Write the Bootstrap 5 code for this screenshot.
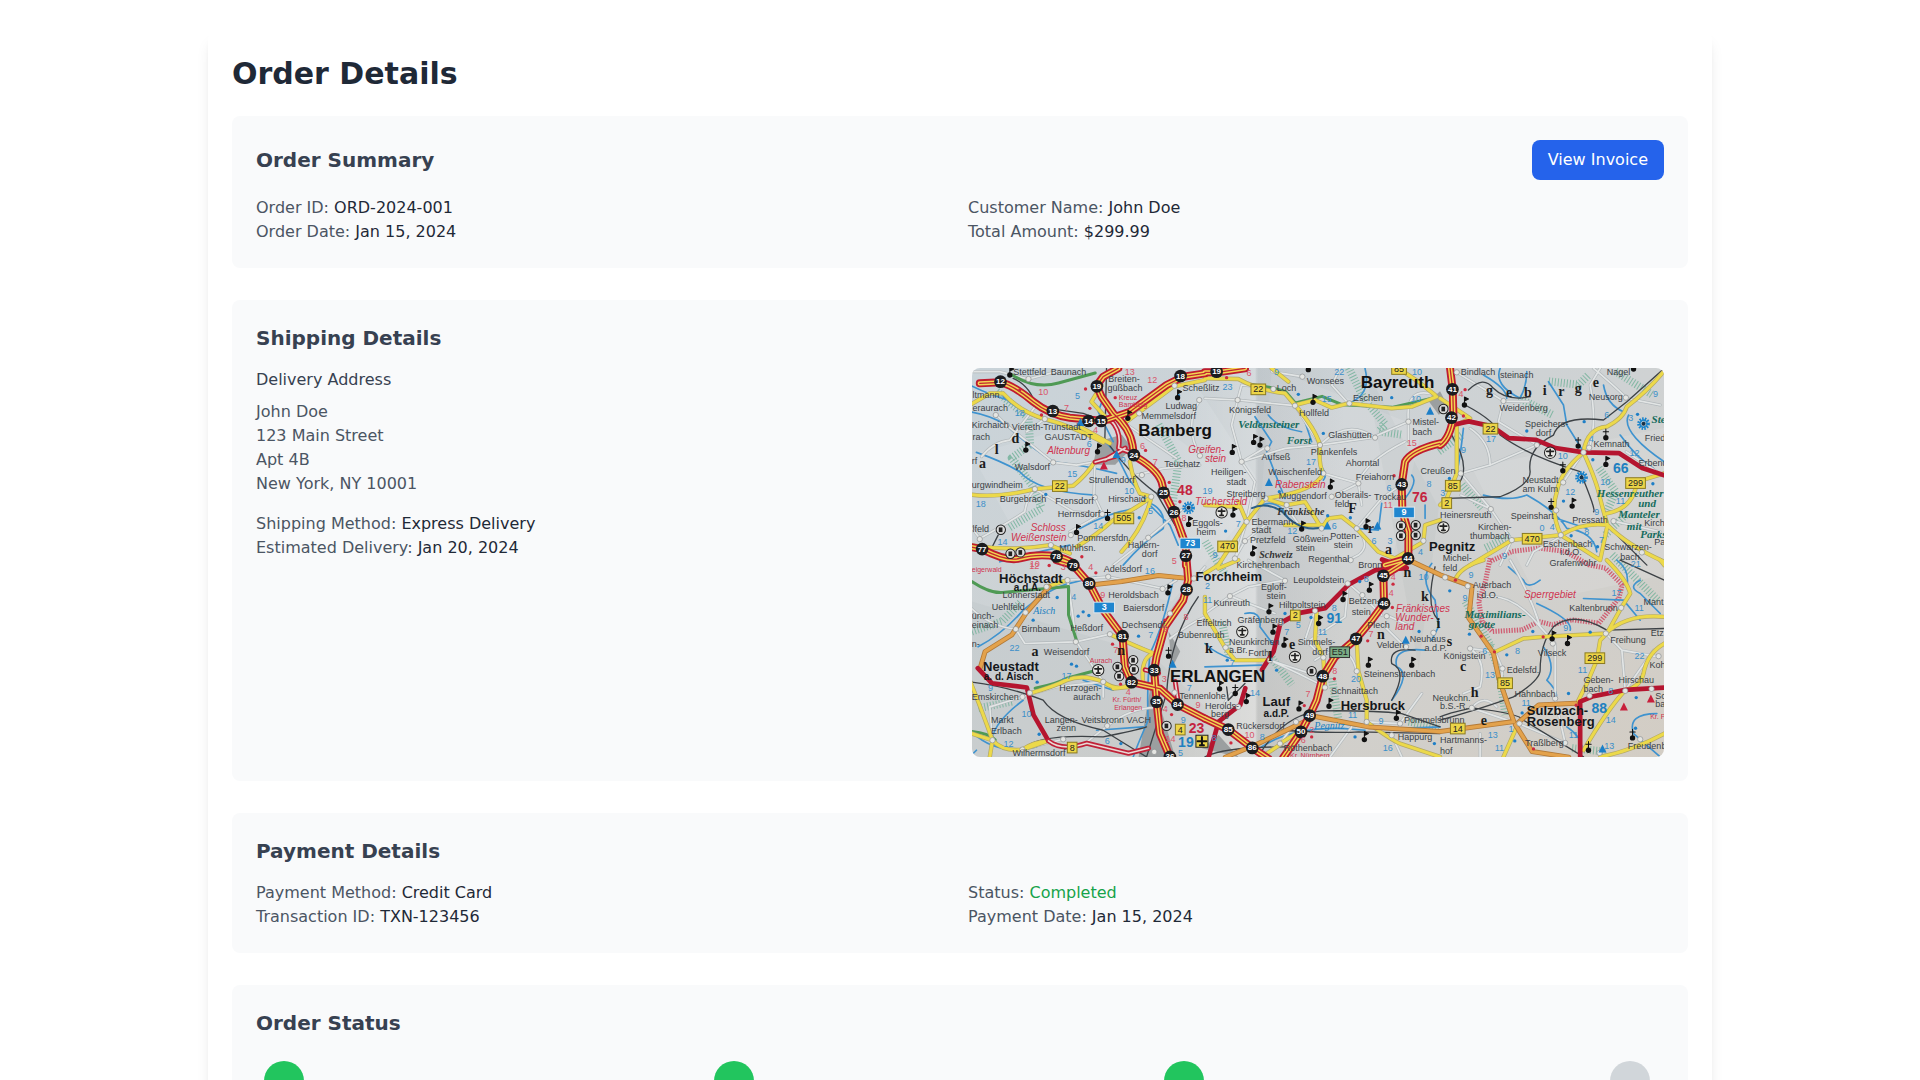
<!DOCTYPE html>
<html lang="en">
<head>
<meta charset="utf-8">
<meta name="viewport" content="width=device-width, initial-scale=1">
<title>Order Details</title>
<link href="https://cdn.jsdelivr.net/npm/bootstrap@5.3.0/dist/css/bootstrap.min.css" rel="stylesheet">
<style>
  body { font-family: "DejaVu Sans", sans-serif; font-size: 16px; line-height: 24px; color: #1f2937; background: #fff; }
  .page-wrap { max-width: 1536px; padding: 32px 16px; }
  .order-sheet { background: #fff; border-radius: 8px; padding: 24px; box-shadow: 0 10px 15px -3px rgba(0,0,0,.1), 0 4px 6px -4px rgba(0,0,0,.1); }
  h1 { font-size: 30px; line-height: 36px; font-weight: 700; margin: 0 0 24px; color: #1f2937; }
  h2 { font-size: 20px; line-height: 28px; font-weight: 600; margin: 0; color: #374151; }
  h3 { font-size: 16px; line-height: 24px; font-weight: 500; color: #374151; margin: 0 0 8px; }
  .panel { background: #f9fafb; border-radius: 8px; padding: 24px; }
  .panel + .panel { margin-top: 32px; }
  p, address { margin: 0; color: #4b5563; line-height: 24px; }
  p span { color: #1f2937; font-weight: 500; }
  p .is-done { color: #16a34a; }
  .btn-invoice { --bs-btn-bg: #2563eb; --bs-btn-color: #fff; --bs-btn-hover-bg: #1d4ed8; --bs-btn-hover-color: #fff; border: 0; border-radius: 8px; padding: 8px 16px; line-height: 24px; }
  .g-wide { --bs-gutter-x: 24px; }
  .g-base { --bs-gutter-x: 16px; }
  .route-map { display: block; width: 100%; aspect-ratio: 16 / 9; border-radius: 8px; }
  .step { display: flex; justify-content: center; }
  .step-s { width: 56px; } .step-m { width: 68px; } .step-l { width: 76px; }
  .step i { width: 40px; height: 40px; border-radius: 50%; background: #22c55e; }
  .step .todo { background: #d1d6da; }

  .route-map path { fill: none; stroke-linecap: round; stroke-linejoin: round; }
  .route-map text { font-family: "Liberation Sans", Arial, sans-serif; dominant-baseline: central; }
  .route-map .town { font-size: 27px; fill: #3b3f45; }
  .route-map .city { font-size: 51px; font-weight: 700; fill: #111; }
  .route-map .mid { font-size: 39px; font-weight: 700; fill: #15171a; }
  .route-map .sub { font-size: 30px; font-weight: 700; fill: #15171a; }
  .route-map .sight { font-size: 30px; font-style: italic; fill: #cf3450; }
  .route-map .exit { font-size: 21px; fill: #cf3450; }
  .route-map .wood { font-family: "Liberation Serif", serif; font-size: 33px; font-weight: 700; font-style: italic; fill: #146b5c; }
  .route-map .area { font-family: "Liberation Serif", serif; font-size: 30px; font-weight: 700; font-style: italic; fill: #333; }
  .route-map .spread { font-family: "Liberation Serif", serif; font-size: 42px; font-weight: 700; fill: #1c1c1c; }
  .route-map .water { font-family: "Liberation Serif", serif; font-size: 30px; font-style: italic; fill: #1c7fc0; }
  .route-map .km { font-size: 27px; fill: #3b8fc9; text-anchor: middle; }
  .route-map .kmr { font-size: 27px; fill: #d9546a; text-anchor: middle; }
  .route-map .page { font-size: 42px; font-weight: 700; fill: #2080c0; text-anchor: middle; }
  .route-map .pager { font-size: 42px; font-weight: 700; fill: #c42440; text-anchor: middle; }
  .route-map .jn { font-size: 24px; font-weight: 700; fill: #fff; text-anchor: middle; }
  .route-map .no { font-size: 27px; fill: #222; text-anchor: middle; }
  .route-map .now { font-size: 27px; font-weight: 700; fill: #fff; text-anchor: middle; }
</style>
<script src="https://cdn.jsdelivr.net/npm/bootstrap@5.3.0/dist/js/bootstrap.bundle.min.js"></script>
</head>
<body>
<main class="container-fluid page-wrap">
  <div class="order-sheet">
    <h1>Order Details</h1>

    <section class="panel">
      <div class="d-flex justify-content-between align-items-center mb-3">
        <h2>Order Summary</h2>
        <button type="button" class="btn btn-invoice">View Invoice</button>
      </div>
      <div class="row g-base">
        <div class="col-md-6">
          <p>Order ID: <span>ORD-2024-001</span></p>
          <p>Order Date: <span>Jan 15, 2024</span></p>
        </div>
        <div class="col-md-6">
          <p>Customer Name: <span>John Doe</span></p>
          <p>Total Amount: <span>$299.99</span></p>
        </div>
      </div>
    </section>

    <section class="panel">
      <h2 class="mb-3">Shipping Details</h2>
      <div class="row g-wide">
        <div class="col-md-6">
          <h3>Delivery Address</h3>
          <address>John Doe<br>123 Main Street<br>Apt 4B<br>New York, NY 10001</address>
          <div class="mt-3">
            <p>Shipping Method: <span>Express Delivery</span></p>
            <p>Estimated Delivery: <span>Jan 20, 2024</span></p>
          </div>
        </div>
        <div class="col-md-6">
<svg class="route-map" id="routeMap" viewBox="0 0 2076 1167" preserveAspectRatio="xMidYMid slice" role="img" aria-label="Delivery map">
  <defs>
    <linearGradient id="paper" x1="0" y1="0" x2="1" y2="1">
      <stop offset="0" stop-color="#c9d3d9"/><stop offset=".5" stop-color="#cfd2d3"/><stop offset="1" stop-color="#d3cdc4"/>
    </linearGradient>
    <linearGradient id="fold" x1="0" x2="1" y1="0" y2="0">
      <stop offset="0" stop-color="#fff" stop-opacity="0"/><stop offset=".48" stop-color="#fff" stop-opacity=".25"/>
      <stop offset=".5" stop-color="#70757a" stop-opacity=".12"/><stop offset="1" stop-color="#70757a" stop-opacity="0"/>
    </linearGradient>
    <g id="minor">
      <g transform="translate(-6 -9)"><path d="M35 275Q70 230 120 225L200 120M80 150L110 180 250 292M195 372Q170 400 165 440 120 470 30 520M250 292L320 300 375 290M375 397L400 450M300 500L395 447M500 330L580 310 690 300M690 105Q640 180 690 272M430 600L535 518 640 430M0 20L90 20 176 42 260 20M375 290L372 397M225 162L170 200M470 178L620 280M195 372L310 440 395 447M30 520L0 480"/></g>
      <g transform="translate(699 -9)"><path d="M98 105L110 60 200 70M98 105L270 122M430 115L380 60 405 10M270 122L345 240 500 218 610 170M110 290L80 180 98 105M110 290L240 250 345 240M185 245L110 290 150 350 125 470M510 218Q430 160 350 235M610 170Q600 60 690 90M460 355Q480 290 600 230M355 325L460 355 470 420M90 580L120 528 180 480M240 420L290 490 350 490M455 490L530 400 590 358M292 35L200 20M125 470L90 580M380 395L460 355M0 100L98 105M455 490Q500 540 460 570L430 585M610 170L610 230"/></g>
      <g transform="translate(1404 -9)"><path d="M50 22L190 108 175 170 290 240M190 108L265 110M290 240Q220 270 150 300L62 325M90 190Q150 230 150 300M62 325L152 432 215 525 370 510M152 432L62 390M370 350L430 262M560 100Q520 60 460 10M450 240Q470 170 450 60L480 10M215 525L180 600M560 100L660 120M520 468L660 500M370 510L280 560 260 600M558 260L650 320"/></g>
      <g transform="translate(-6 576)"><path d="M293 60L320 245 400 365M420 222L318 245M138 207L165 250 318 245M167 157L138 207M138 207Q60 200 0 140M400 365L400 410M158 410L60 440 68 540M158 410L260 380 400 365M412 497L345 550M280 537L158 568M412 497Q500 430 590 445M318 245Q310 160 293 60M578 85L415 50 293 60M578 85L620 60M420 222L530 270M600 235Q660 190 705 170M230 80L167 157M705 20L670 60M600 160L650 90"/></g>
      <g transform="translate(699 576)"><path d="M75 108L130 80 240 60M75 108L0 160M75 108L210 160M430 70L470 105 530 165M355 290L300 240 330 150M195 300L345 350M360 380L280 340 195 300M240 60L130 0M545 165L620 200M430 70L420 170 300 250M360 380Q320 420 320 450M600 260L540 200M80 400Q20 470 100 440M455 333Q430 230 330 300M273 485L225 550M485 485L585 490 650 400M560 525L590 590M375 590L440 500"/></g>
      <g transform="translate(1404 576)"><path d="M210 0Q270 100 300 200L345 250 345 415M83 78L15 52M497 220L545 270 555 390M90 265L165 275M187 325L165 275M95 443Q170 470 235 490M95 443Q130 400 170 440M300 200Q220 100 140 110M375 548L235 490M555 390L640 270M375 548L345 415M187 325Q180 380 200 440M90 265Q140 300 120 380L70 400M545 270L655 290M120 520L120 590"/></g>
    </g>
    <g id="yellow">
      <g transform="translate(-6 -9)"><path d="M100 85Q150 140 225 162 300 180 400 232M0 388Q80 400 195 372L310 362Q350 330 375 290M545 395Q500 430 430 465 380 510 320 545M0 540Q120 560 240 540L300 565M480 290Q490 350 510 385L545 395M470 170L610 65 705 45M330 185L420 235M0 120L60 85 100 85M395 60L365 110 420 170M455 560Q520 490 545 395"/></g>
      <g transform="translate(699 -9)"><path d="M0 40L100 42Q160 75 240 85L270 120 330 105 380 128 430 115 560 130 620 125 695 95M580 10L640 50 690 90M200 10L250 50M270 120Q330 190 345 240 340 300 355 325 330 380 180 400L125 470 40 600M180 400L245 420 300 410 350 490 370 460 410 455 455 490 520 560 570 580 655 530 660 480 705 465M100 410L125 470M0 420L100 425M240 480L350 480"/></g>
      <g transform="translate(1404 -9)"><path d="M0 100L90 160 50 180 50 325 20 400M670 20Q620 80 560 125 550 160 500 185 440 190 430 262 360 320 350 380 330 440 362 510M430 262Q470 350 480 400 490 440 502 480M590 350Q580 430 500 445M672 325L590 350M90 600L215 525 362 510Q430 470 502 480L480 585 362 510M502 480Q560 540 672 590M0 420L20 400"/></g>
      <g transform="translate(-6 576)"><path d="M178 400Q250 380 290 360 340 340 400 365 450 400 485 366M0 360Q40 460 68 540 100 575 158 568L235 542M68 540L60 590M0 518L68 540M158 568Q190 545 235 542M420 222Q500 260 553 280 510 290 520 370M293 60L230 80M480 380L430 385"/></g>
      <g transform="translate(699 576)"><path d="M0 160L60 262 90 300 195 300M335 155L330 240 355 290 360 380M455 240L460 333 485 420 485 485M225 550L290 510M485 485Q560 540 585 550L705 590M0 40L40 15M170 590L230 550M100 0L40 25M0 110L0 160"/></g>
      <g transform="translate(1404 576)"><path d="M45 60Q60 20 130 0M500 0Q560 60 570 100L543 143 500 220 480 240 470 300 440 370 410 430M165 275L250 235 310 230 400 225 500 220M672 170Q560 160 497 220M672 250Q620 280 610 340 600 380 555 390M555 390Q500 450 430 570M190 590L230 500M480 590Q580 570 672 520M660 0L672 15"/></g>
    </g>
    <g id="mway">
      <g transform="translate(-6 -9)"><path d="M30 55L92 52Q130 60 190 110 240 150 300 158L400 168 480 140 590 60 640 35 705 25"/><path d="M445 10L400 35 380 62 395 95 430 145Q480 190 488 240L492 272Q560 310 575 350L583 383 612 441 648 540 648 600"/><path d="M0 545L37 552Q110 590 150 580 200 565 260 574 300 585 316 600"/></g>
      <g transform="translate(699 -9)"><path d="M0 22L38 22 120 10M705 235Q620 255 600 290L590 358 592 440 610 500 610 580 540 600"/></g>
      <g transform="translate(1404 -9)"><path d="M30 10L38 75 40 155Q30 220 0 240"/></g>
      <g transform="translate(-6 576)"><path d="M260 0L310 15 358 70 400 150 458 228 465 320 485 366 570 385 623 433 705 475M650 0L655 60 640 120 585 200 560 290 553 330 560 425 570 520 600 590"/></g>
      <g transform="translate(699 576)"><path d="M610 0L535 47 537 130 500 180 453 236 390 290 353 350 335 420 314 466 288 515 235 592M0 475L70 508 142 563 190 595"/></g>
    </g>
    <circle id="jn" r="19" fill="#1b1c1f"/>
    <g id="church"><path d="M0 0V-24L12 -18 0 -12" style="stroke:#111;stroke-width:3;fill:#111"/><circle r="8" fill="#111"/></g>
    <g id="chapel"><path d="M0 0V-26M-8 -18H8" style="stroke:#111;stroke-width:3"/><circle r="8" fill="#111"/></g>
    <g id="fly"><circle r="17" fill="#e8e8e4" stroke="#222" stroke-width="3"/><path d="M-10 -4H10M0 -10V9M-5 9H5" style="stroke:#222;stroke-width:5"/></g>
    <g id="stop"><circle r="14" fill="#ddd" stroke="#222" stroke-width="3"/><rect x="-6" y="-7" width="11" height="14" fill="#222"/></g>
    <path id="tri" d="M0 -13L12 11H-12Z" style="fill:#1c7fc8"/>
    <path id="trir" d="M0 -13L12 11H-12Z" style="fill:#c8203c"/>
    <g id="star"><circle r="13" fill="none" stroke="#1b84cc" stroke-width="12" stroke-dasharray="4 3"/><circle r="11" fill="none" stroke="#1b84cc" stroke-width="4"/><circle r="6" fill="#16324a"/></g>
    <circle id="town" r="8" fill="#e4e5e2" stroke="#898d90" stroke-width="2"/>
    <circle id="pin" r="5" fill="#1f7fc6"/>
    <circle id="pinr" r="5" fill="#cc2b3f"/>
  </defs>

  <rect width="2076" height="1167" fill="url(#paper)"/>
  <g opacity=".1"><path style="fill:#fff" d="M0 260L500 120 860 400 600 700 200 620ZM900 0L1350 180 1250 620 860 480ZM1500 300L2076 180V620L1700 700Z"/></g>
  <g opacity=".06"><path style="fill:#7c8284" d="M0 700L540 860 854 1167H0ZM640 0L854 330V0ZM1180 0L1400 420 1340 900 1250 400Z"/></g>
  <rect x="600" width="520" height="1167" fill="url(#fold)"/>
  <path style="fill:#9b9fa0" d="M364 290L378 220 450 200 480 240 430 290ZM500 1167L540 930 610 1167ZM1370 100L1404 70 1430 120 1400 140ZM690 1140L740 1100 800 1167ZM590 790L625 850 600 900Z"/>

  <g stroke="#6fb097" stroke-width="24" stroke-dasharray="3 6" opacity=".8"><path style="stroke-linecap:butt" d="M75 70L170 150 175 230 120 270 180 350 210 420 110 480M560 170L620 280 600 420M0 790L90 760 150 700M1190 110L1240 170 1220 190 1290 200M1130 0L1180 100M1730 40L1820 50 1850 20M1640 90L1740 140M1880 300L1930 370 1900 440M1470 350L1530 420M1540 540L1620 500M700 520L760 620M900 870L960 950M1550 830L1580 900 1600 1040M1920 560L2060 700M1080 930L1100 1060M1930 10L2040 80M20 1020L120 1000M1400 250L1470 200M1800 1140L1900 1150M1480 700L1560 840M750 760L770 860M1310 1060L1400 1080M1900 500L1960 440"/></g>
  <g stroke="#cf4a63" stroke-width="15" stroke-dasharray="4 4" opacity=".85"><path style="stroke-linecap:butt" d="M1554 570L1540 640 1520 700 1530 760 1560 790 1650 785 1700 760 1740 770 1800 755 1880 765 1940 690 1950 650 1900 600 1850 590 1780 550 1700 540 1620 550 1554 580"/></g>

  <g stroke="#3f93cf" stroke-width="5">
    <g transform="translate(-6 -9)"><path d="M0 140Q60 150 110 180 160 230 250 290 340 300 440 325M20 262Q100 290 150 320 200 380 375 390M100 95Q180 170 330 190 400 210 440 270L475 340 540 420 560 440 600 480 625 540M330 490Q420 440 500 430M530 410Q590 430 580 490 520 530 460 600M400 100L385 140 430 230M90 590Q200 560 300 540M0 60Q60 90 130 110"/></g>
    <g transform="translate(699 -9)"><path d="M150 155L200 230 185 260 220 350 240 400M170 420Q220 400 250 460 300 500 350 490M345 300Q370 330 355 345M190 150Q220 190 290 200M480 10Q500 90 430 115M530 415L520 495 455 490M620 330Q640 350 600 400M300 170L320 230M660 420V460"/></g>
    <g transform="translate(1404 -9)"><path d="M130 30Q200 70 200 100M325 50L370 120 380 180 430 260M180 10Q160 60 240 100 260 60 260 20M565 150Q540 200 672 290M540 210Q590 280 640 310M130 390Q210 410 260 390 350 440 380 490 460 500 470 560M70 190Q60 280 50 325M350 460L440 490M490 60Q500 120 550 140"/></g>
    <g transform="translate(-6 576)"><path d="M25 260Q100 220 160 150 230 90 290 72L380 50M610 60Q580 200 540 280 530 400 535 480 500 560 490 590M340 360L430 390M0 510Q80 590 200 560M380 510L520 500M0 590L20 570M160 420Q80 480 68 530"/></g>
    <g transform="translate(699 576)"><path d="M0 320L170 315M120 160Q170 150 165 200L210 260M680 10Q640 60 690 120L700 200 680 240M660 270Q560 260 575 320 620 340 560 420M170 560Q260 500 420 505L480 510M0 250Q30 280 90 300M410 490Q520 510 705 500"/></g>
    <g transform="translate(1404 576)"><path d="M205 20L250 60Q260 90 300 60M290 130Q400 180 390 210M430 115L550 120 600 180M310 260Q350 320 320 360 360 400 345 415M600 60Q560 80 600 100L660 160M650 460Q560 460 580 520L660 590M380 500Q440 540 420 590M530 0Q570 30 560 80"/></g>
  </g>
  <use href="#minor" stroke="#b2b8bb" stroke-width="9"/>
  <use href="#minor" stroke="#e2e5e5" stroke-width="5"/>
  <g stroke="#3d4246" stroke-width="4">
    <g transform="translate(-6 -9)"><path d="M130 40Q180 60 200 125L340 145 405 168M410 10L405 220Q470 320 560 385L650 540M85 510L60 560"/></g>
    <g transform="translate(1404 -9)"><path d="M85 75Q130 30 160 70 200 110 270 95M75 120Q170 170 180 210 260 270 420 320 470 440 460 440M20 400L180 395Q270 360 270 320 260 250 340 210 360 150 490 165L560 110 672 10M35 210Q90 300 60 350M500 480L620 600"/></g>
    <g transform="translate(-6 576)"><path d="M0 365Q120 380 220 420 260 480 400 510 480 560 530 590M158 568Q200 520 400 530 500 510 530 500M685 110Q600 230 590 400L530 590"/></g>
    <g transform="translate(699 576)"><path d="M630 270Q550 260 560 310 610 330 560 420M165 580Q240 460 350 452 500 450 590 460L705 500M690 20Q660 140 700 180M0 590Q60 560 240 560M65 380L70 420 120 370M230 510Q400 520 460 515L705 520"/></g>
    <g transform="translate(1404 576)"><path d="M0 480Q140 440 220 410 300 360 300 330 300 250 340 200 400 150 500 210L672 205M95 443Q240 460 250 480L430 590M95 443Q20 460 0 470M540 0L672 60"/></g>
  </g>
  <g stroke="#4f9a55" stroke-width="9">
    <path d="M120 20Q190 65 260 45L370 15M838 50Q890 55 940 70L970 105 1050 85 1110 110 1260 118 1390 88M0 640Q60 680 100 672L290 655 290 740 315 820M190 960Q260 945 285 930L360 910M0 1090Q50 1095 70 1115"/>
  </g>
  <use href="#yellow" stroke="#b3a866" stroke-width="13"/>
  <use href="#yellow" stroke="#ecd94a" stroke-width="9"/>
  <g stroke="#2d5f86" stroke-width="6"><path d="M840 420Q880 400 930 430 980 490 1040 480"/></g>
  <path stroke="#b37a38" stroke-width="15" d="M362 650L450 640 560 622 640 630M232 656L164 733 120 800 40 850 25 900M1310 576L1404 620 1500 655 1490 750 1564 855 1580 930 1625 1060 1404 1090 1190 1076 1030 1045 850 1130 760 1167M1630 1070L1700 1010 1810 1005M1630 1070L1680 1150 1790 1167"/>
  <path stroke="#e3a24c" stroke-width="10" d="M362 650L450 640 560 622 640 630M232 656L164 733 120 800 40 850 25 900M1310 576L1404 620 1500 655 1490 750 1564 855 1580 930 1625 1060 1404 1090 1190 1076 1030 1045 850 1130 760 1167M1630 1070L1700 1010 1810 1005M1630 1070L1680 1150 1790 1167"/>
  <path stroke="#b5152f" stroke-width="14" d="M1444 170L1490 160 1560 175 1610 210 1690 215 1750 240 1835 253 1940 255 2010 300 2076 322M1824 1167V1000L1860 985 1960 965 2010 962 2076 958M1304 600L1210 606 1129 650 1060 720 980 735 925 765 905 850 870 905M1230 574L1304 600M820 960L805 1010 740 1060 710 1167M18 900L60 945 165 958 185 1040 230 1118"/>
  <path stroke="#c02238" stroke-width="15" d="M230 1118Q270 1150 345 1125L470 1155 530 1140M415 155Q450 190 440 240L480 255M370 282L430 265M400 275L460 240M520 905L560 915M610 940L620 1010"/>
  <path stroke="#e9d8d4" stroke-width="5" d="M230 1118Q270 1150 345 1125L470 1155 530 1140M415 155Q450 190 440 240L480 255M370 282L430 265M400 275L460 240M520 905L560 915M610 940L620 1010"/>
  <use href="#mway" stroke="#bf1c2e" stroke-width="24"/>
  <use href="#mway" stroke="#f1d552" stroke-width="13"/>
  <use href="#mway" stroke="#c4262f" stroke-width="4"/>
</svg>
        </div>
      </div>
    </section>

    <section class="panel">
      <h2 class="mb-3">Payment Details</h2>
      <div class="row g-base">
        <div class="col-md-6">
          <p>Payment Method: <span>Credit Card</span></p>
          <p>Transaction ID: <span>TXN-123456</span></p>
        </div>
        <div class="col-md-6">
          <p>Status: <span class="is-done">Completed</span></p>
          <p>Payment Date: <span>Jan 15, 2024</span></p>
        </div>
      </div>
    </section>

    <section class="panel">
      <h2 class="mb-4">Order Status</h2>
      <div class="d-flex justify-content-between">
        <div class="step step-s"><i></i></div>
        <div class="step step-l"><i></i></div>
        <div class="step step-s"><i></i></div>
        <div class="step step-m"><i class="todo"></i></div>
      </div>
    </section>
  </div>
</main>
<script>
// Map places, one sheet per block: origin, then "kind x y text" entries.
const sheets = [
[-6, -9, `pinr 150 75;pinr 347 72;town 176 42;town 78 150;town 110 180;town 225 162;town 250 292;town 195 372;town 375 397;town 397 447;town 688 105;town 690 272;town 516 330;town 544 395;town 535 518;town 30 522;town 243 540;town 303 510;town 614 62;town 508 145;pinr 436 98;pinr 215 150;pinr 360 130;pinr 598 352;pinr 630 410;pinr 527 256;pin 228 388;pin 508 458;pin 626 92;pinr 336 575
church 120 30;church 168 255;church 383 260;church 623 98;church 474 160;chapel 413 460;church 320 502;church 656 478;tri 440 268;tri 332 172;trir 402 302;star 656 428;stop 122 566;stop 152 562;stop 93 494
jn 92 50 12;jn 249 138 13;jn 356 168 14;jn 394 168 15;jn 381 64 19;jn 632 33 18;jn 492 270 24;jn 581 383 25;jn 612 441 26;jn 37 552 77;jn 260 574 78;jn 648 572 27
town 130 22 Stettfeld;town 243 22 Baunach;town 8 90 ltmann;town 8 130 eraurach;town 6 180 Kirchaich;town 8 217 rach;town 126 187 Viereth-Trunstadt;town 224 217 GAUSTADT;town 135 306 Walsdorf;town 6 360 urgwindheim;town 90 402 Burgebrach;town 256 408 Frensdorf;town 264 448 Herrnsdorf;town 8 492 lfeld;town 322 520 Pommersfdn.;town 268 550 Mühlhsn.;town 474 540 Hallern-;town 516 567 dorf;town 415 402 Hirschaid;town 357 345 Strullendorf;town 415 43 Breiten-;town 413 70 güßbach;town 638 68 Scheßlitz;town 587 122 Ludwag;town 515 154 Memmelsdorf;town 583 296 Teuchatz;town 6 288 rf;town 667 475 Eggols-;town 680 502 heim
sight 232 257 Altenburg;sight 183 486 Schloss;sight 124 518 Weißenstein;exit 447 96 Kreuz;exit 447 117 Bamberg;sight 655 252 Greifen-;city 505 195 Bamberg
kmr 220 80 10;kmr 290 128 7;km 323 94 5;km 150 143 18;km 358 237 6;km 307 328 15;km 33 418 18;km 478 378 10;km 542 438 5;km 385 484 14;km 98 530 14;kmr 547 44 12;kmr 480 22 13;kmr 377 195 4;km 460 285 9;kmr 518 242 6;kmr 556 290 7;kmr 642 460 8;kmr 195 596 10;kmr 613 588 5;pager 645 376 48
sign 270 363 22;sign 462 460 505;blue 661 535 73;spread 125 220 d;spread 75 252 l;spread 28 294 a`],
[699, -9, `town 98 105;town 292 35;town 270 122;town 433 115;town 510 218;town 610 170;town 110 290;town 345 240;town 460 355;town 355 325;town 182 400;town 125 470;town 380 395;town 245 420;town 455 490;town 120 528;town 90 580;town 350 490;town 187 250;town 205 72;town 437 585;town 655 527;pin 560 98;pin 280 88;pin 355 205;pin 223 380;pin 436 458;pin 62 498;pin 368 452;pinr 65 38;pinr 567 332
church 310 14;church 324 112;church 146 232;church 165 240;church 82 262;church 376 366;church 84 450;church 290 492;church 143 566;church 483 485;tri 675 138;tri 192 352;tri 367 482;tri 517 482;fly 50 442;stop 588 482;stop 632 480;stop 588 512;stop 632 510
jn 35 20 19;jn 590 358 43;jn 609 580 44
town 215 68 Loch;town 305 48 Wonsees;town 444 100 Eschen;town 72 135 Königsfeld;town 282 145 Hollfeld;town 370 211 Glashütten;town 622 172 Mistel-;town 622 200 bach;town 170 275 Aufseß;town 317 260 Plankenfels;town 18 322 Heiligen-;town 65 352 stadt;town 190 320 Waischenfeld;town 422 294 Ahorntal;town 452 335 Freiahorn;town 646 318 Creußen;town 65 387 Streitberg;town 221 394 Muggendorf;town 389 390 Oberails-;town 389 416 feld;town 507 396 Trockau;town 140 470 Ebermann-;town 140 496 stadt;town 135 526 Pretzfeld;town 263 522 Gößwein-;town 272 550 stein;town 376 514 Potten-;town 386 540 stein;town 310 582 Regenthal
sight 0 280 stein;sight 210 357 Rabenstein;sight -30 410 Tüchersfeld;wood 100 178 Veldensteiner;wood 245 225 Forst;area 217 438 Fränkische;area 163 568 Schweiz;city 467 53 Bayreuth;mid 672 544 Pegnitz
kmr 132 25 6;km 215 22 9;km 68 65 23;km 403 22 22;km 365 102 15;km 633 102 10;km 636 22 10;kmr 620 234 15;km 318 292 17;km 8 378 19;km 100 478 7;km 262 497 12;km 388 483 6;km 507 528 6;km 555 528 3;kmr 549 420 11;km 552 370 6;km 672 358 8;km 646 562 4;km 30 570 9;pager 644 396 76
sign 160 73 22;sign 582 12 85;sign 68 544 470;blue 597 442 9;spread 430 430 F;spread 488 490 r;spread 540 552 a`],
[1404, -9, `town 50 22;town 190 108;town 290 240;town 557 98;town 62 325;town 152 432;town 215 525;town 369 352;town 430 262;town 447 248;town 348 436;town 362 510;town 520 468;town 605 562;pin 432 170;pin 592 148;pin 458 284;pin 370 408;pin 260 198;pin 638 356;pin 393 512;pin 28 340;pin 472 545;pinr 75 74;pinr 70 153
church 73 120;church 497 298;chapel 497 218;chapel 414 243;chapel 368 317;church 396 423;chapel 333 427;church 580 12;star 610 176;star 424 337;fly 330 263;fly 10 487;stop 10 132
jn 37 73 41;jn 34 158 42
town 62 22 Bindlach;town 180 30 steinach;town 500 22 Nagel;town 178 130 Weidenberg;town 446 97 Neusorg;town 255 178 Speichers-;town 287 204 dorf;town 614 220 Fried;town 460 238 Kemnath;town 595 293 Erbend;town 247 345 Neustadt;town 247 372 am Kulm;town 0 450 Heinersreuth;town 212 452 Speinshart;town 114 487 Kirchen-;town 90 514 thumbach;town 396 465 Pressath;town 612 474 Kirch;town 308 536 Eschenbach;town 360 562 i.d.O.;town 8 578 Michel-;town 492 547 Schwarzen-;town 540 575 bach;town 328 594 Grafenwöhr;town 642 530 Pa
wood 634 162 Ste;wood 470 385 Hessenreuther;wood 594 413 und;wood 534 448 Manteler;wood 560 482 mit;wood 600 506 Parks
kmr 63 88 4;km 153 222 17;km 70 254 9;km 368 272 10;km 453 222 4;km 500 150 6;km 572 158 3;km 646 86 9;km 583 263 12;km 495 352 10;km 390 382 12;km 541 408 11;km 470 440 9;km 306 488 0;km 336 486 4;km 440 502 8;km 455 538 7;km 484 524 7;km 193 573 9;km 8 385 3;km 587 596 21;page 542 308 66
sign 151 191 22;sign 586 354 299;sign 38 362 85;sign 20 414 2;sign 276 521 470
spread 138 75 g;spread 198 82 e;spread 252 82 b;spread 308 76 i;spread 354 78 r;spread 404 70 g;spread 458 52 e`],
[-6, 576, `town 293 60;town 415 50;town 230 80;town 578 86;town 167 157;town 138 207;town 318 245;town 420 222;town 400 365;town 180 398;town 158 410;town 68 540;town 158 568;town 280 537;town 412 497;town 600 160;town 614 397;town 672 55;town 553 575;pin 262 112;pin 190 180;pin 325 168;pin 340 155;pin 357 166;pin 305 312;pin 320 318;pin 208 522;pin 453 550;pin 202 366;pin 506 228;pinr 238 16;pinr 378 38;pinr 428 252;pinr 452 372;pinr 605 463;pinr 585 180
church 594 98;chapel 596 288;fly 385 330;stop 490 300;stop 443 320;stop 492 328;stop 448 348;tri 608 312;stop 590 497
jn 310 15 79;jn 358 70 80;jn 458 228 81;jn 485 366 82;jn 553 330 33;jn 650 88 28;jn 560 425 35;jn 623 433 84;jn 600 590 36
town 402 26 Adelsdorf;town 98 106 Lonnerstadt;town 66 140 Uehlfeld;town 415 106 Heroldsbach;town 460 143 Baiersdorf;town 6 168 ünch-;town 6 194 einach;town 155 205 Birnbaum;town 302 202 Heßdorf;town 456 195 Dechsendf.;town 624 223 Bubenreuth;town 222 275 Weisendorf;town 6 252 n-;town 268 384 Herzogen-;town 310 410 aurach;town 6 410 Emskirchen;town 64 480 Markt;town 64 512 Erlbach;town 225 478 Langen-;town 260 504 zenn;town 335 478 Veitsbronn;town 470 478 VACH;town 628 408 Tennenlohe;town 128 578 Wilhermsdorf;town 680 188 Effeltrich
exit 6 27 eigerwald;exit 360 300 Aurach;exit 428 418 Kr. Fürth/;exit 433 441 Erlangen
mid 88 54 Höchstadt;sub 132 82 a.d.A.;mid 40 318 Neustadt;sub 42 348 a. d. Aisch;city 600 350 ERLANGEN
kmr 193 17 12;kmr 280 22 3;kmr 363 20 4;km 540 34 16;kmr 399 104 9;km 312 110 4;km 134 262 22;km 290 346 17;km 62 384 9;km 170 460 10;km 116 550 12;km 412 543 6;kmr 475 396 4;kmr 583 355 3;kmr 648 170 8;km 543 225 7;km 658 384 7;kmr 684 434 9;kmr 586 445 4;km 640 478 9;kmr 602 536 14;km 632 578 5;kmr 438 268 7;kmr 587 206 9;page 648 546 19;pager 680 504 23
blue 403 142 3;sign 307 562 8;sign 631 508 4;plane 695 543;water 190 150 Aisch;spread 185 275 a;spread 442 270 n`],
[699, 576, `town 75 108;town 240 62;town 428 70;town 330 152;town 228 188;town 545 168;town 62 262;town 195 300;town 355 292;town 455 333;town 603 260;town 360 382;town 273 485;town 485 485;town 585 490;town 225 550;town 560 525;town 100 440;town 472 105;town 685 218;pin 464 64;pin 240 160;pin 318 172;pin 215 330;pin 67 300;pin 642 214;pin 450 530;pin 688 550;pinr 564 72;pinr 562 142;pinr 488 242;pinr 388 356;pinr 320 530;pinr 298 436;pinr 78 548
church 192 155;church 204 216;church 237 255;church 341 190;church 414 118;church 493 90;church 490 315;church 620 315;church 372 438;church 282 446;church 124 424;church 44 386;chapel 91 400;church 478 538;church 574 474;fly 112 215;fly 270 290;stop 320 333;tri 602 240
jn 535 47 45;jn 537 130 46;jn 453 236 47;jn 353 348 48;jn 314 466 49;jn 288 515 50;jn 70 508 85;jn 142 563 86
town 95 14 Kirchehrenbach;town 460 16 Bronn;town 265 60 Leupoldstein;town 168 80 Egloff-;town 185 107 stein;town 26 128 Kunreuth;town 222 134 Hiltpoltstein;town 431 124 Betzen-;town 440 156 stein;town 98 180 Gräfenberg;town 72 244 Neunkirchen;town 72 270 a.Br.;town 130 278 Forth;town 278 245 Simmels-;town 322 275 dorf;town 487 196 Plech;town 515 254 Velden;town 614 236 Neuhaus;town 658 262 a.d.P.;town 476 342 Steinensittenbach;town 378 391 Schnaittach;town 94 498 Rückersdorf;town 0 436 Herolds-;town 18 462 berg;town 578 530 Happurg;town 236 562 Röthenbach;town 597 478 Pommelsbrunn;town 682 412 Neukchn.;exit 255 586 Kr. Nürnberg
mid -28 48 Forchheim;mid 173 425 Lauf;sub 176 460 a.d.P.;mid 407 436 Hersbruck;sight 573 144 Fränkisches;sight 571 172 Wunder-;sight 571 200 land;water 328 495 Pegnitz
km 8 78 2;km 8 120 11;km 484 58 8;kmr 565 52 4;kmr 559 98 4;km 655 50 10;km 388 143 8;km 280 196 5;km 245 216 7;km 352 215 11;km 82 308 7;kmr 498 222 7;kmr 389 333 8;kmr 309 402 7;km 453 357 20;km 150 398 14;km 443 464 11;km 528 482 9;kmr 320 508 2;kmr 134 524 10;km 172 530 8;kmr 295 540 6;km 548 562 16;km 28 533 8;page 388 174 91
sign 271 166 2;green 404 276 E51;spread 0 264 k;spread 252 252 e;spread 190 290 l;spread 595 38 n;spread 648 108 k;spread 516 222 n;spread 694 190 i`],
[1404, 576, `town 15 52;town 83 78;town 90 265;town 187 325;town 543 143;town 497 220;town 338 250;town 345 415;town 95 443;town 555 392;town 448 406;town 634 386;town 655 288;town 238 490;town 375 548;town 600 537;town 478 578;pin 29 92;pin 88 222;pin 200 284;pin 278 214;pin 450 216;pin 385 400;pin 246 458;pin 224 542;pin 588 412;pin 586 504;pinr 46 60;pinr 123 228;pinr 163 275;pinr 309 230;pinr 408 435;pinr 280 566
church 336 236;church 382 250;chapel 445 570;chapel 577 533;tri 487 566;trir 551 440;trir 632 416
town 8 25 feld;town 98 76 Auerbach;town 110 104 i.d.O.;town 387 143 Kaltenbrunn;town 610 125 Mant;town 510 238 Freihung;town 632 218 Etz;town 293 278 Vilseck;town 10 287 Königstein;town 200 329 Edelsfd.;town 223 401 Hahnbach;town 430 360 Geben-;town 430 386 bach;town 535 359 Hirschau;town 628 313 Koh;town 645 406 Sc;town 645 432 ba;town 0 438 b.S.-R.;town 0 540 Hartmanns-;town 0 573 hof;town 255 549 Traßlberg;town 563 556 Freudenb;exit 630 470 Kr. P
sight 252 104 Sperrgebiet;wood 73 162 Maximilians-;wood 86 192 grotte;mid 260 452 Sulzbach-;mid 260 484 Rosenberg
km 93 45 9;km 75 115 9;km 529 98 17;km 597 143 11;km 377 203 9;km 134 272 6;km 232 272 8;km 150 345 13;km 427 328 11;km 598 288 22;km 512 392 8;km 258 427 11;km 512 478 14;km 158 523 13;km 400 525 11;km 178 562 11;km 507 556 13;km 213 507 1;page 477 442 88
sign 464 294 299;sign 195 369 85;sign 53 505 14;spread 20 245 s;spread 60 320 c;spread 92 398 h;spread 122 482 e`]
];
const ns = 'http://www.w3.org/2000/svg', svg = document.getElementById('routeMap');
const add = (tag, attrs, text) => {
  const el = document.createElementNS(ns, tag);
  for (const k in attrs) el.setAttribute(k, attrs[k]);
  if (text) el.textContent = text;
  svg.appendChild(el);
};
const tints = { sign: ['#ecd548', '#8a7a20'], blue: ['#1f86cf', '#dfe8ee'], green: ['#79ab84', '#333'] };
for (const [ox, oy, list] of sheets) {
  for (const entry of list.split(/[;\n]/)) {
    const [kind, px, py, ...rest] = entry.trim().split(' ');
    const x = +px + ox, y = +py + oy, text = rest.join(' ');
    if (kind === 'plane') {
      add('rect', { x: x - 17, y: y - 18, width: 36, height: 36, fill: '#ecd548', stroke: '#222', 'stroke-width': 3 });
      add('path', { d: `M${x - 12} ${y}H${x + 14}M${x + 1} ${y - 13}V${y + 12}M${x - 5} ${y + 12}H${x + 7}`, stroke: '#111', 'stroke-width': 6 });
    } else if (!text) {
      add('use', { href: '#' + kind, x, y });
    } else if (tints[kind]) {
      const w = kind === 'blue' ? 62 : 14 + text.length * 15;
      add('rect', { x: x - w / 2, y: y - 16, width: w, height: 32, fill: tints[kind][0], stroke: tints[kind][1], 'stroke-width': 3 });
      add('text', { x, y, class: kind === 'blue' ? 'now' : 'no' }, text);
    } else {
      if (kind === 'jn') add('use', { href: '#jn', x, y });
      add('text', { x, y, class: kind }, text);
    }
  }
}
</script>
</body>
</html>
